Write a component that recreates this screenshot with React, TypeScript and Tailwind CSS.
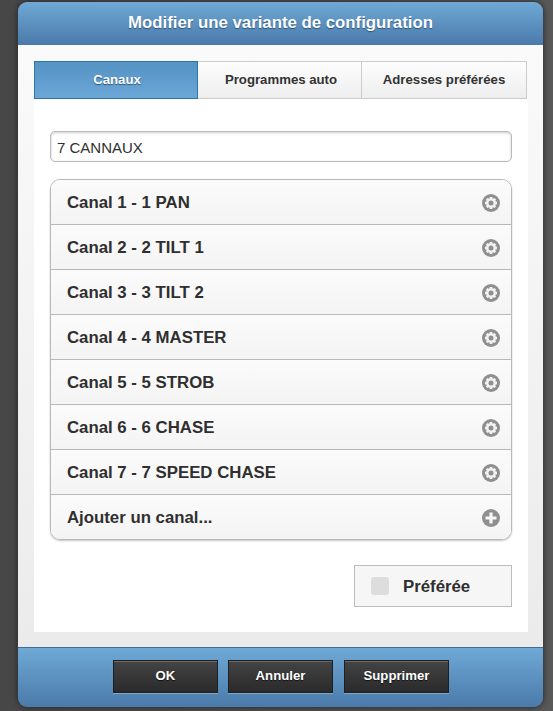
const channels = [
  "Canal 1 - 1 PAN",
  "Canal 2 - 2 TILT 1",
  "Canal 3 - 3 TILT 2",
  "Canal 4 - 4 MASTER",
  "Canal 5 - 5 STROB",
  "Canal 6 - 6 CHASE",
  "Canal 7 - 7 SPEED CHASE",
];

// gear in a grey disc
function GearIcon() {
  return (
    <svg width="18" height="18" viewBox="0 0 18 18" className="mt-[1px] shrink-0">
      <circle cx="9" cy="9" r="9" fill="#8f8f8f" />
      <g fill="#f2f2f2">
        <rect x="7.6" y="3" width="2.8" height="12" rx="0.6" />
        <rect x="3" y="7.6" width="12" height="2.8" rx="0.6" />
        <rect x="7.6" y="3" width="2.8" height="12" rx="0.6" transform="rotate(45 9 9)" />
        <rect x="7.6" y="3" width="2.8" height="12" rx="0.6" transform="rotate(-45 9 9)" />
        <circle cx="9" cy="9" r="4.8" />
      </g>
      <circle cx="9" cy="9" r="2.5" fill="#8f8f8f" />
    </svg>
  );
}

function PlusIcon() {
  return (
    <svg width="18" height="18" viewBox="0 0 18 18" className="mt-[1px] shrink-0">
      <circle cx="9" cy="9" r="9" fill="#8f8f8f" />
      <path d="M7.4 3.5h3.2v3.9h3.9v3.2h-3.9v3.9H7.4v-3.9H3.5V7.4h3.9z" fill="#f7f7f7" />
    </svg>
  );
}

function Row({ label, last, children }: { label: string; last?: boolean; children: React.ReactNode }) {
  return (
    <div
      className={`flex items-center justify-between bg-gradient-to-b from-[#fbfbfb] to-[#f4f4f4] pl-4 pr-[11px] ${
        last ? "h-[44px]" : "h-[45px] border-b border-[#b9b9b9]"
      }`}
    >
      <span className="pt-[1px] text-[16.8px] font-bold text-[#2f2f2f]">{label}</span>
      {children}
    </div>
  );
}

function FooterButton({ label, className }: { label: string; className?: string }) {
  return (
    <button
      className={`h-[33px] w-[105px] border border-[#1f1f1f] bg-gradient-to-b from-[#444444] to-[#2a2a2a] pb-[1px] text-[13.2px] font-bold text-white shadow-[0_1px_0_#7ea6cc,inset_0_1px_0_#6a6a6a] [text-shadow:0_1px_1px_#111] ${className ?? ""}`}
    >
      {label}
    </button>
  );
}

export default function App() {
  return (
    <div className="h-[711px] w-[553px] overflow-hidden bg-gradient-to-r from-[#474747] to-[#595959] pt-[2px] pl-[18px] font-['Liberation_Sans',Arial,sans-serif]">
      <div className="flex h-[705px] w-[525px] flex-col overflow-hidden rounded-[9px] shadow-[0_0_6px_#222]">
        {/* title bar */}
        <header className="flex h-[43px] shrink-0 items-center justify-center bg-gradient-to-b from-[#6fa9d6] to-[#4a7aaa] pb-[2px] text-[16.8px] font-bold text-white [text-shadow:0_1px_1px_#2c5378]">
          Modifier une variante de configuration
        </header>

        {/* body */}
        <div className="flex flex-1 flex-col bg-gradient-to-b from-[#fafafa] to-[#ebebeb] px-4 pt-4 pb-[15px]">
          <div className="flex h-[38px] w-[493px] shrink-0 text-[13.2px] font-bold">
            <div className="flex w-[164px] items-center justify-center border border-[#2a76a8] bg-gradient-to-b from-[#5593c5] to-[#6ba6d6] pb-[1px] pl-[2px] text-white [text-shadow:0_1px_1px_#2c5378]">
              Canaux
            </div>
            <div className="flex w-[164px] items-center justify-center border-y border-r border-[#cccccc] bg-gradient-to-b from-[#fdfdfd] to-[#eeeeee] pb-[1px] pl-[3px] text-[#333333]">
              Programmes auto
            </div>
            <div className="flex w-[165px] items-center justify-center border-y border-r border-[#cccccc] bg-gradient-to-b from-[#fdfdfd] to-[#eeeeee] pb-[1px] text-[#333333]">
              Adresses préférées
            </div>
          </div>

          <div className="flex w-[494px] flex-1 flex-col bg-white px-4 pt-8">
            <div className="flex h-[31px] shrink-0 items-center rounded-[5px] border border-[#b9b9b9] bg-white px-[6px] pt-[3px] text-[15px] text-[#2f2f2f] shadow-[inset_0_1px_3px_#cfcfcf]">
              7 CANNAUX
            </div>

            <div className="mt-[17px] overflow-hidden rounded-[10px] border border-[#b9b9b9] shadow-[0_1px_2px_#c4c4c4]">
              {channels.map((channel) => (
                <Row key={channel} label={channel}>
                  <GearIcon />
                </Row>
              ))}
              <Row label="Ajouter un canal..." last>
                <PlusIcon />
              </Row>
            </div>

            <div className="mt-[25px] flex justify-end">
              <div className="flex h-[42px] w-[158px] items-center border border-[#bcbcbc] bg-[#f6f6f6] pl-[16px]">
                <span className="h-[18px] w-[18px] rounded-[3px] bg-[#dddddd]" />
                <span className="ml-[14px] pt-[1px] text-[16.8px] font-bold text-[#2f2f2f]">Préférée</span>
              </div>
            </div>
          </div>
        </div>

        {/* footer */}
        <footer className="flex h-[60px] shrink-0 items-center justify-center gap-[10px] border-t border-[#3f6d99] bg-gradient-to-b from-[#6fa9d6] to-[#4a7aaa] pb-[2px] pl-[1px]">
          <FooterButton label="OK" />
          <FooterButton label="Annuler" />
          <FooterButton label="Supprimer" className="ml-[1px]" />
        </footer>
      </div>
    </div>
  );
}
